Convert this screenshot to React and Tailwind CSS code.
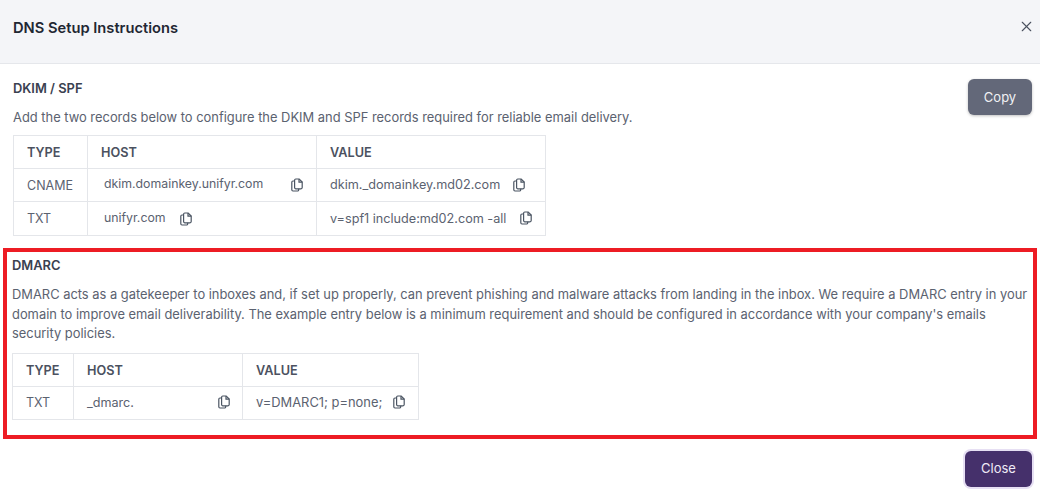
import { X } from 'lucide-react'

function CopyIcon() {
  return (
    <svg width="14" height="14" viewBox="0 0 14 14" fill="none" stroke="#4b5563" strokeWidth="1.2" className="shrink-0">
      <path d="M4.5 3H3a1.2 1.2 0 0 0-1.2 1.2v7.6A1.2 1.2 0 0 0 3 13h4.5a1.2 1.2 0 0 0 1.2-1.2v-1" />
      <path d="M5.8 1h3.4L12.2 4v5.6a1.2 1.2 0 0 1-1.2 1.2H5.8a1.2 1.2 0 0 1-1.2-1.2V2.200A1.2 1.2 0 0 1 5.800 1z" />
      <path d="M9 1v3.200h3.200" />
    </svg>
  )
}

function RecordTable({ columns, rows, widthClass }) {
  return (
    <table className={`${widthClass} table-fixed border-collapse text-[12.5px] text-[#5b6270]`}>
      <colgroup>
        {columns.map(c => <col key={c.label} className={c.width} />)}
      </colgroup>
      <thead>
        <tr className="h-[33px]">
          {columns.map(c => (
            <th key={c.label} className="border border-[#e4e6ea] pt-[2px] pl-[13px] text-left text-[12.7px] font-semibold text-[#4b5160]">{c.label}</th>
          ))}
        </tr>
      </thead>
      <tbody>
        {rows.map(r => (
          <tr key={r.type} className={r.height}>
            <td className="border border-[#e4e6ea] pt-[2px] pl-[13px]">{r.type}</td>
            <td className="border border-[#e4e6ea] pl-[13px] pr-[12px]">
              <div className={`flex items-center ${r.hostGap}`}>
                <span className={r.hostClass}>{r.host}</span>
                <CopyIcon />
              </div>
            </td>
            <td className="border border-[#e4e6ea] pl-[13px]">
              <div className={`flex items-center ${r.valueGap}`}>
                <span className={r.valueClass}>{r.value}</span>
                <CopyIcon />
              </div>
            </td>
          </tr>
        ))}
      </tbody>
    </table>
  )
}

const dkimColumns = [
  { label: 'TYPE', width: 'w-[74px]' },
  { label: 'HOST', width: 'w-[229px]' },
  { label: 'VALUE', width: 'w-[229px]' },
]

const dkimRows = [
  { type: 'CNAME', height: 'h-[33px]', host: 'dkim.domainkey.unifyr.com', hostClass: 'ml-[3px] -mt-[1px] text-[12.3px]', hostGap: 'justify-between', value: 'dkim._domainkey.md02.com', valueClass: 'pt-[1px] text-[12.65px]', valueGap: 'gap-[12px]' },
  { type: 'TXT', height: 'h-[34px]', host: 'unifyr.com', hostClass: 'ml-[3px] -mt-[1px] text-[12.3px]', hostGap: 'gap-[13px]', value: 'v=spf1 include:md02.com -all', valueClass: 'pt-[1px] text-[12.65px]', valueGap: 'gap-[13px]' },
]

const dmarcColumns = [
  { label: 'TYPE', width: 'w-[61px]' },
  { label: 'HOST', width: 'w-[169px]' },
  { label: 'VALUE', width: 'w-[176px]' },
]

const dmarcRows = [
  { type: 'TXT', height: 'h-[33px]', host: '_dmarc.', hostClass: 'pt-[1px] text-[12.6px]', hostGap: 'justify-between -mr-[1px]', value: 'v=DMARC1; p=none;', valueClass: 'pt-[1px] text-[12.9px]', valueGap: 'gap-[10px]' },
]

export default function App() {
  return (
    <div className="flex h-[496px] w-[1040px] flex-col overflow-hidden bg-white font-['Inter',sans-serif]">
      <div className="flex h-[64px] shrink-0 items-center justify-between border-b border-[#e5e7eb] bg-[#f4f5f8] pl-[13px] pr-[5px]">
        <h1 className="-mt-[7px] text-[14.7px] font-semibold text-[#1f2733]">DNS Setup Instructions</h1>
        <X size={17} strokeWidth={1.6} className="-mt-[11px] text-[#4b5160]" />
      </div>

      <div className="flex items-start justify-between pl-[13px] pr-[8px]">
        <div className="w-[534px]">
          <h2 className="mt-[17px] text-[12.9px] leading-[16px] font-semibold text-[#3a4150]">DKIM / SPF</h2>
          <p className="mt-[12px] mb-[8px] w-[700px] text-[12.9px] leading-[18px] text-[#5b6270]">
            Add the two records below to configure the DKIM and SPF records required for reliable email delivery.
          </p>
          <RecordTable columns={dkimColumns} rows={dkimRows} widthClass="w-[532px]" />
        </div>
        <button className="mt-[15px] h-[36px] w-[64px] rounded-[6px] bg-[#636879] pt-[2px] text-[13px] text-[#f0f1f4] shadow-[0_1px_3px_rgba(0,0,0,0.25)]">Copy</button>
      </div>

      <section className="mx-[3px] mt-[12px] h-[191px] border-[4px] border-[#ed1c24] pl-[5px] pr-[4px]">
        <h2 className="mt-[6px] text-[12.9px] leading-[16px] font-semibold text-[#3a4150]">DMARC</h2>
        <p className="mt-[11px] mb-[9px] text-[12.9px] leading-[19.5px] text-[#5b6270]">
          DMARC acts as a gatekeeper to inboxes and, if set up properly, can prevent phishing and malware attacks from landing in the inbox. We require a DMARC entry in your domain to improve email deliverability. The example entry below is a minimum requirement and should be configured in accordance with your company's emails security policies.
        </p>
        <RecordTable columns={dmarcColumns} rows={dmarcRows} widthClass="w-[406px]" />
      </section>

      <div className="flex justify-end pr-[8px] pt-[12px]">
        <button className="h-[36px] w-[67px] rounded-[6px] bg-[#45306b] text-[13px] text-[#efeaf6] shadow-[0_0_0_2px_#e6dff3]">Close</button>
      </div>
    </div>
  )
}
